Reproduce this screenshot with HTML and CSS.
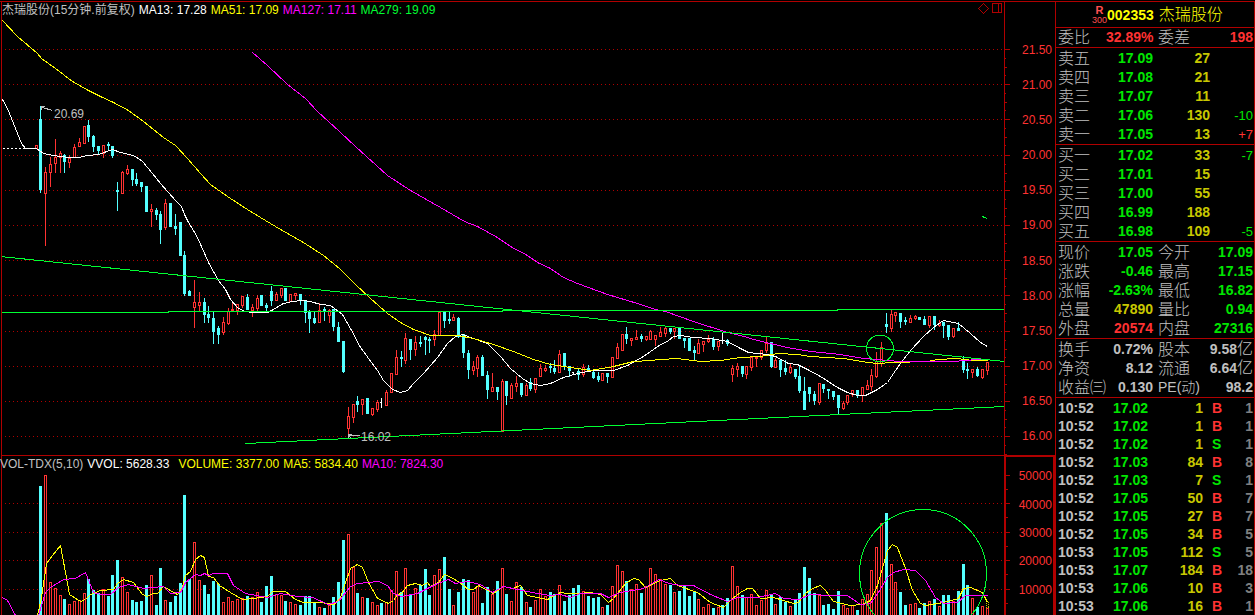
FILE: index.html
```
<!DOCTYPE html>
<html lang="zh-CN">
<head>
    <meta charset="UTF-8">
    <meta name="viewport" content="width=device-width, initial-scale=1.0">
    <title>002353 杰瑞股份</title>
    <link rel="stylesheet" href="styles.css">
</head>
<body>
    <main class="terminal">
        <section class="chart price-chart">
            <div class="legend">
                <span class="legend-title">杰瑞股份(15分钟.前复权)</span>
                <span class="white">MA13: 17.28</span>
                <span class="yellow">MA51: 17.09</span>
                <span class="magenta">MA127: 17.11</span>
                <span class="green">MA279: 19.09</span>
            </div>
            <svg id="price" viewBox="2 2 1002 453" preserveAspectRatio="none"></svg>
        </section>
        <div class="axis price-axis">
            <svg id="priceTicks" viewBox="0 2 10 453" preserveAspectRatio="none"></svg>
            <ul>
                <li>21.50</li>
                <li>21.00</li>
                <li>20.50</li>
                <li>20.00</li>
                <li>19.50</li>
                <li>19.00</li>
                <li>18.50</li>
                <li>18.00</li>
                <li>17.50</li>
                <li>17.00</li>
                <li>16.50</li>
                <li>16.00</li>
            </ul>
        </div>
        <section class="chart volume-chart">
            <div class="legend">
                <span class="legend-title">VOL-TDX(5,10)</span>
                <span class="white">VVOL: 5628.33</span>
                <span class="yellow wide">VOLUME: 3377.00</span>
                <span class="yellow">MA5: 5834.40</span>
                <span class="magenta">MA10: 7824.30</span>
            </div>
            <svg id="volume" viewBox="2 456 1002 159" preserveAspectRatio="none"></svg>
        </section>
        <div class="axis volume-axis">
            <svg id="volumeTicks" viewBox="0 457 10 158" preserveAspectRatio="none"></svg>
            <ul>
                <li>50000</li>
                <li>40000</li>
                <li>30000</li>
                <li>20000</li>
                <li>10000</li>
            </ul>
        </div>
        <aside class="quote">
            <header class="stock">
                <span class="badge"><b>R</b><span>300</span></span>
                <b class="code">002353</b>
                <span class="name">杰瑞股份</span>
            </header>
            <table class="ratio pairs">
                <tr><th>委比</th><td class="red">32.89%</td><th>委差</th><td class="red">198</td></tr>
            </table>
            <table class="orders">
                <tr><th>卖五</th><td class="down">17.09</td><td class="gold">27</td><td></td></tr>
                <tr><th>卖四</th><td class="down">17.08</td><td class="gold">21</td><td></td></tr>
                <tr><th>卖三</th><td class="down">17.07</td><td class="gold">11</td><td></td></tr>
                <tr><th>卖二</th><td class="down">17.06</td><td class="gold">130</td><td class="down">-10</td></tr>
                <tr><th>卖一</th><td class="down">17.05</td><td class="gold">13</td><td class="red">+7</td></tr>
            </table>
            <table class="orders">
                <tr><th>买一</th><td class="down">17.02</td><td class="gold">33</td><td class="down">-7</td></tr>
                <tr><th>买二</th><td class="down">17.01</td><td class="gold">15</td><td></td></tr>
                <tr><th>买三</th><td class="down">17.00</td><td class="gold">55</td><td></td></tr>
                <tr><th>买四</th><td class="down">16.99</td><td class="gold">188</td><td></td></tr>
                <tr><th>买五</th><td class="down">16.98</td><td class="gold">109</td><td class="down">-5</td></tr>
            </table>
            <table class="pairs">
                <tr><th>现价</th><td class="down">17.05</td><th>今开</th><td class="down">17.09</td></tr>
                <tr><th>涨跌</th><td class="down">-0.46</td><th>最高</th><td class="down">17.15</td></tr>
                <tr><th>涨幅</th><td class="down">-2.63%</td><th>最低</th><td class="down">16.82</td></tr>
                <tr><th>总量</th><td class="gold">47890</td><th>量比</th><td class="down">0.94</td></tr>
                <tr><th>外盘</th><td class="red">20574</td><th>内盘</th><td class="down">27316</td></tr>
            </table>
            <table class="pairs">
                <tr><th>换手</th><td>0.72%</td><th>股本</th><td>9.58<i>亿</i></td></tr>
                <tr><th>净资</th><td>8.12</td><th>流通</th><td>6.64<i>亿</i></td></tr>
                <tr><th>收益㈢</th><td>0.130</td><th class="pe">PE(动)</th><td>98.2</td></tr>
            </table>
            <table class="trades">
                <tr><td>10:52</td><td>17.02</td><td>1</td><td class="red">B</td><td>1</td></tr>
                <tr><td>10:52</td><td>17.02</td><td>1</td><td class="red">B</td><td>1</td></tr>
                <tr><td>10:52</td><td>17.02</td><td>1</td><td class="down">S</td><td>1</td></tr>
                <tr><td>10:52</td><td>17.03</td><td>84</td><td class="red">B</td><td>8</td></tr>
                <tr><td>10:52</td><td>17.03</td><td>7</td><td class="down">S</td><td>1</td></tr>
                <tr><td>10:52</td><td>17.05</td><td>50</td><td class="red">B</td><td>7</td></tr>
                <tr><td>10:52</td><td>17.05</td><td>27</td><td class="red">B</td><td>7</td></tr>
                <tr><td>10:52</td><td>17.05</td><td>34</td><td class="red">B</td><td>5</td></tr>
                <tr><td>10:53</td><td>17.05</td><td>112</td><td class="down">S</td><td>5</td></tr>
                <tr><td>10:53</td><td>17.07</td><td>184</td><td class="red">B</td><td>18</td></tr>
                <tr><td>10:53</td><td>17.06</td><td>10</td><td class="red">B</td><td>3</td></tr>
                <tr><td>10:53</td><td>17.06</td><td>16</td><td class="red">B</td><td>1</td></tr>
            </table>
        </aside>
    </main>
    <script src="chart.js"></script>
</body>
</html>
```
FILE: styles.css
```
* {
    box-sizing: border-box;
}

body {
    margin: 0;
    padding-top: 1px;
    background-color: #000;
    color: #c0c0c0;
    font-family: "Liberation Sans", "Noto Sans CJK SC", sans-serif;
    font-size: 12px;
}

.terminal {
    display: grid;
    grid-template-columns: 1fr 51px 200px;
    grid-template-rows: 453fr 160fr;
    height: calc(100vh - 1px);
    border-top: 1px solid #b00000;
    overflow: hidden;
}

.chart {
    position: relative;
    min-height: 0;
    margin-left: 1px;
    border-left: 1px solid #b00000;
}

.volume-chart {
    border-top: 1px solid #b00000;
}

.chart svg {
    display: block;
    width: 100%;
    height: 100%;
    shape-rendering: crispEdges;
}

.legend {
    position: absolute;
    top: 0;
    left: 0;
    display: flex;
    gap: 4px;
    line-height: 16px;
    white-space: nowrap;
}

.volume-chart .legend {
    left: -2px;
}

.legend .wide {
    margin-left: 5px;
}

/* axes */
.axis {
    display: flex;
    min-height: 0;
    border-left: 1px solid #b00000;
    color: #ff3232;
}

.volume-axis {
    border: 2px solid #b00000;
    border-bottom: 0;
}

.axis svg {
    width: 10px;
    height: 100%;
    shape-rendering: crispEdges;
}

.axis ul {
    flex: 1;
    display: grid;
    grid-auto-rows: 1fr;
    margin: 0;
    padding: 30px 3px 1px 0;
    list-style: none;
    text-align: right;
}

.volume-axis ul {
    padding: 5px 1px 11px 0;
}

.axis li {
    display: flex;
    align-items: center;
    justify-content: flex-end;
    min-height: 0;
}

/* quote panel */
.quote {
    grid-column: 3;
    grid-row: 1 / 3;
    border-left: 1px solid #b00000;
    border-right: 1px solid #b00000;
    overflow: hidden;
}

.stock {
    display: flex;
    align-items: center;
    height: 26px;
    padding-left: 36px;
    border-bottom: 1px solid #b00000;
    color: #ffff00;
}

.badge {
    display: flex;
    flex-direction: column;
    align-items: center;
    color: #ff5050;
    font-size: 9px;
    line-height: 10px;
}

.badge b {
    font-size: 11px;
}

.code {
    font-size: 14px;
}

.name {
    margin-left: 5px;
    font-size: 16px;
    font-weight: 300;
    line-height: 24px;
}

table {
    width: 100%;
    table-layout: fixed;
    border-collapse: separate;
    border-spacing: 0;
    padding-top: 1px;
    border-bottom: 1px solid #b00000;
}

th,
td {
    height: 19px;
    padding: 0;
    line-height: 19px;
    font-size: 14px;
    font-weight: bold;
    text-align: right;
    white-space: nowrap;
}

td {
    padding-right: 1px;
}

th {
    padding-left: 2px;
    font-size: 16px;
    font-weight: 300;
    text-align: left;
}

td i {
    font-size: 16px;
    font-style: normal;
    font-weight: 300;
    line-height: 16px;
}

.ratio {
    padding-top: 0;
}

.pairs th:first-child,
.orders th {
    width: 50px;
}

.pairs td:nth-child(2),
.orders td:nth-child(2) {
    width: 48px;
}

.pairs th:nth-child(3) {
    width: 52px;
    padding-left: 4px;
}

.pairs .pe {
    font-size: 14px;
}

.orders td:nth-child(3) {
    width: 57px;
}

.orders td:nth-child(4) {
    font-size: 13px;
    font-weight: normal;
}

.trades {
    border-bottom: 0;
}

.trades td {
    height: 18px;
    line-height: 18px;
    color: #808080;
}

.trades td:nth-child(1) {
    width: 44px;
    padding-left: 2px;
    color: #c0c0c0;
    text-align: left;
}

.trades td:nth-child(2) {
    width: 49px;
    color: #00e600;
}

.trades td:nth-child(3) {
    width: 55px;
    color: #c8c800;
}

.trades td:nth-child(4) {
    width: 24px;
    padding-left: 8px;
    text-align: left;
}

.white {
    color: #fff;
}

.yellow {
    color: #ffff00;
}

.magenta {
    color: #ff00ff;
}

.green {
    color: #00ff32;
}

.gold {
    color: #c8c800;
}

.red,
.trades .red {
    color: #ff3232;
}

.down,
.trades .down {
    color: #00e600;
}

/* drawing */
.grid-line {
    stroke: #b00000;
    stroke-dasharray: 1 3;
}

.tick,
.tool {
    fill: none;
    stroke: #b00000;
}

.up {
    fill: #000;
    stroke: #ff3232;
}

.fall {
    fill: #54ffff;
    stroke: #54ffff;
}

.flat,
.ma13 {
    fill: none;
    stroke: #fff;
}

.ma51 {
    fill: none;
    stroke: #ffff00;
}

.ma127 {
    fill: none;
    stroke: #ff00ff;
}

.trend {
    fill: none;
    stroke: #00ff32;
}

.open-line {
    stroke: #fff;
    stroke-dasharray: 2 2;
}

.forecast {
    fill: none;
    stroke: #c8c800;
    stroke-dasharray: 1 1;
}

.note {
    fill: #c0c0c0;
    font-size: 12px;
}

.note-line {
    fill: none;
    stroke: #c0c0c0;
}
```
FILE: chart.js
```
// x, type (r = up, c = down, w = flat), high, body top, body bottom, low, volume top
const bars = `
36 r 145 145 148 148 0
40 c 105 119 189 192 486
45 r 166 172 193 245 475
50 r 156 164 172 186 582
55 r 138 157 163 172 588
60 r 150 153 157 172 595
64 c 153 155 161 172 599
69 r 154 158 162 167 604
74 r 143 147 157 157 601
79 r 137 142 146 146 600
84 r 125 126 143 143 593
88 c 119 125 136 141 579
93 c 134 136 146 151 590
98 c 145 146 150 153 593
103 r 145 145 153 157 589
108 c 141 144 145 150 596
112 c 145 146 155 157 575
117 c 181 190 191 210 560
122 r 170 172 193 193 577
127 r 164 169 173 174 592
132 c 169 169 179 185 600
136 c 172 179 183 185 602
141 c 182 182 186 191 601
146 c 186 186 211 211 585
151 r 203 209 211 226 575
156 c 207 210 214 219 605
160 c 210 214 229 243 568
165 r 198 203 227 229 600
170 c 203 203 226 226 602
175 c 213 226 228 234 596
180 c 222 222 255 255 583
184 c 250 255 293 295 495
189 c 289 291 295 295 579
194 r 279 302 307 327 542
199 r 291 302 305 311 580
204 c 297 302 314 322 585
208 c 305 314 317 322 594
213 c 311 318 331 343 581
218 c 325 328 334 343 584
223 r 316 322 332 334 602
228 r 307 311 323 324 597
232 r 302 309 310 310 601
237 r 304 304 310 314 599
242 r 296 296 305 307 598
247 c 293 297 309 309 596
252 r 303 307 310 316 597
257 r 294 298 308 310 592
261 c 295 295 305 305 602
266 c 302 305 307 312 586
271 c 285 291 300 305 576
276 r 291 294 300 300 594
281 r 288 288 295 297 595
285 c 288 288 300 300 601
290 r 294 294 301 301 602
295 r 293 293 295 299 604
300 c 293 294 299 304 605
305 c 299 300 312 322 596
309 c 309 312 318 332 596
314 c 311 318 322 323 603
319 r 302 310 322 322 607
324 c 306 309 311 320 608
329 r 308 310 315 322 605
333 c 309 309 326 330 597
338 c 321 327 341 341 582
343 c 340 341 371 372 540
348 r 406 416 428 435 534
353 r 404 404 417 422 567
357 c 395 401 404 411 593
362 r 399 399 404 414 597
367 c 398 398 413 413 598
372 r 408 408 414 415 602
377 r 399 402 409 411 605
381 w 397 402 402 407 603
386 r 389 392 405 405 602
391 r 373 373 392 392 590
396 r 349 357 374 374 571
401 c 350 357 358 366 592
405 r 332 338 360 363 568
410 c 339 339 349 359 594
415 r 335 342 349 355 588
420 c 335 342 343 346 585
425 c 335 337 339 354 569
429 c 336 339 340 352 595
434 r 329 334 339 345 575
439 r 312 312 335 335 569
444 c 311 312 320 327 557
449 c 311 319 320 323 589
453 r 313 317 320 320 605
458 c 316 318 336 337 592
463 c 334 334 352 357 579
468 c 349 353 369 378 580
473 r 360 366 370 374 592
477 r 354 357 368 376 586
482 c 354 357 375 375 603
487 c 370 375 389 398 587
492 r 372 387 391 391 594
497 c 387 387 391 399 581
502 r 378 381 431 431 568
506 c 381 381 395 404 594
511 r 382 385 398 398 601
516 r 375 383 386 391 582
521 c 383 383 394 396 587
526 r 382 385 395 395 602
530 c 377 382 388 390 607
535 r 377 378 389 392 600
540 r 363 368 376 376 589
545 r 364 368 370 371 596
550 c 362 366 367 372 592
554 c 359 368 371 373 594
559 r 349 354 372 372 585
564 c 352 353 365 369 601
569 c 366 366 370 376 595
573 w 371 372 372 374 588
578 c 368 371 374 379 585
583 r 363 367 374 376 591
588 c 364 368 371 371 596
593 c 370 372 377 378 598
598 c 371 376 379 381 597
602 r 373 373 380 380 607
607 c 373 373 376 382 605
612 r 356 357 377 377 586
617 r 342 347 358 358 565
622 r 334 334 350 350 571
626 c 326 334 338 343 581
631 r 337 338 340 345 589
636 r 329 337 339 339 584
641 c 333 336 338 341 593
646 r 335 336 339 340 586
650 r 329 331 339 339 568
655 r 335 335 339 345 574
660 r 326 332 336 336 579
665 r 326 328 333 336 584
670 c 327 328 331 333 585
674 r 327 328 331 338 592
679 c 328 328 338 338 591
684 c 337 338 340 347 585
689 c 337 338 350 350 596
694 c 345 350 352 360 591
698 r 338 343 353 353 599
703 r 340 341 344 351 607
708 r 334 339 341 342 604
713 c 336 339 346 349 608
718 r 340 341 346 350 607
722 w 332 340 340 343 605
727 c 338 340 343 345 598
732 r 364 368 374 381 566
737 r 362 366 369 376 586
742 c 366 366 373 376 595
746 r 366 366 374 378 597
751 r 357 357 367 370 594
756 r 357 357 358 366 605
761 r 349 350 357 359 600
766 r 335 343 350 352 590
771 c 342 342 366 367 595
775 r 357 360 367 367 604
780 c 359 360 369 376 597
785 c 359 368 371 374 602
790 r 363 367 372 373 606
795 c 369 369 376 378 600
799 c 365 376 390 392 593
804 c 376 391 409 409 567
809 c 386 387 393 401 578
814 c 390 394 400 404 593
819 r 383 383 402 404 595
823 c 384 384 388 392 605
828 c 388 389 390 398 604
833 c 391 391 396 399 609
838 c 395 395 407 414 591
843 r 400 403 408 409 605
847 r 394 395 402 404 608
852 r 389 390 394 396 605
857 c 389 390 394 397 610
862 r 386 387 395 401 599
867 r 379 385 389 389 594
871 r 368 375 386 390 570
876 r 351 361 376 377 547
881 r 341 347 363 366 523
886 c 312 324 326 332 513
891 r 308 314 328 331 564
895 r 312 312 315 321 582
900 c 312 313 321 327 592
905 c 316 320 321 324 605
910 r 314 318 322 322 604
915 r 314 316 318 319 603
919 c 316 317 319 319 608
924 c 315 319 324 324 603
929 r 316 316 325 327 601
934 c 316 316 324 329 599
939 r 319 323 325 326 606
943 c 321 322 325 337 595
948 c 325 325 336 339 595
953 r 327 328 336 337 601
958 c 321 328 330 330 591
963 c 355 359 369 372 564
967 c 362 369 370 378 585
972 r 368 369 372 377 598
977 c 366 369 375 376 607
982 r 369 369 377 378 606
987 r 362 362 370 374 608`.trim().split('\n').map(row => row.split(' '));

const ma13 = '2,99 7,108 11,118 17,133 21,143 25,148 36,148 43,153 53,155 68,157 78,157 87,155 98,154 112,149 120,152 129,154 135,156 142,161 152,173 160,183 168,192 175,200 181,206 184,214 187,220 197,237 208,262 218,280 225,289 230,299 238,308 245,311 253,312 267,312 273,309 283,303 292,301 302,300 310,301 320,304 330,305 342,314 350,328 360,347 377,370 383,380 392,389 400,392 407,390 413,383 423,373 437,357 447,343 455,336 462,334 473,338 487,343 500,356 510,368 522,378 530,383 540,385 550,383 563,377 577,373 593,370 613,370 627,365 643,356 660,344 667,341 673,336 680,335 692,337 710,338 727,341 740,348 748,352 767,354 775,356 788,363 797,364 807,369 820,376 837,387 847,392 857,395 865,395 877,389 887,382 893,373 900,363 910,350 923,336 933,327 943,320 958,323 970,333 980,342 987,346';
const ma51 = '2,20 17,36 37,53 41,58 55,68 72,81 88,90 100,96 113,102 128,110 143,121 163,137 175,145 187,158 200,173 210,184 227,196 247,209 260,217 280,229 303,242 323,255 339,268 343,272 355,284 370,298 387,313 400,322 413,329 430,335 437,335 457,335 473,338 493,344 513,351 533,359 550,364 570,367 590,370 613,366 633,361 650,360 660,359 677,358 700,361 720,360 740,357 760,356 777,353 797,354 810,356 843,358 867,362 877,363 893,362 927,361 937,359 957,358 972,360 987,360';
const ma127 = '252,52 267,65 287,84 305,98 317,111 339,131 355,146 387,175 410,190 440,207 464,221 477,226 497,237 510,246 527,255 537,262 550,268 563,277 577,283 607,294 637,303 655,309 665,311 693,321 727,332 740,335 757,340 787,347 810,351 840,354 863,358 887,360 900,361 953,361 977,359 987,359';
const volMa5 = '37,615 41,597 46,563 52,555 60,545 65,572 69,594 80,601 85,599 90,594 100,590 113,589 117,583 123,579 133,582 142,594 147,596 152,593 157,593 163,586 177,594 182,587 185,575 190,571 195,559 200,555 204,557 208,576 213,577 219,585 230,592 242,599 253,598 267,596 272,591 285,591 295,599 303,602 320,602 333,604 335,603 340,597 345,582 350,568 357,564 362,567 368,582 377,598 388,603 393,600 397,594 401,593 407,585 415,583 422,585 427,582 430,586 438,582 444,574 453,578 463,585 468,589 473,589 478,585 493,593 503,586 512,588 520,585 527,595 547,599 560,592 567,593 577,593 590,592 600,594 608,602 613,598 625,583 633,578 638,579 645,587 660,580 670,578 677,585 697,592 710,602 723,607 732,598 740,592 747,588 752,588 760,598 773,597 793,603 798,602 805,593 812,588 820,585 825,590 833,601 850,605 862,604 870,600 877,585 887,550 892,544 897,547 905,568 912,590 920,603 925,605 943,602 958,598 963,588 970,587 982,592 987,602';
const volMa10 = '2,597 7,600 15,615 38,615 45,592 50,587 63,579 75,578 85,572 93,592 100,594 110,594 118,587 128,584 143,588 163,586 170,593 180,592 185,582 195,574 200,575 204,573 208,575 213,573 227,573 233,585 245,593 267,597 280,593 297,596 312,597 328,604 338,601 350,586 357,583 378,581 387,585 393,593 401,596 417,593 437,583 448,579 455,583 467,581 480,584 492,592 503,586 517,589 537,593 550,595 560,594 570,597 580,593 600,593 608,597 620,592 643,588 658,579 669,583 680,585 693,585 710,594 727,601 737,597 757,597 775,593 783,598 798,599 810,594 830,595 847,595 860,604 870,603 878,592 887,577 893,572 903,569 915,570 925,580 935,597 943,603 957,602 965,595 987,595';

const priceLevels = [49, 84, 119, 155, 190, 225, 260, 295, 331, 366, 401, 436];
const volumeLevels = [475, 503, 532, 560, 589];
const kinds = { r: 'up', c: 'fall', w: 'flat' };

// shift by half a pixel so 1px strokes stay sharp
function path(d, cls) {
    return `<path class="${cls}" transform="translate(.5 .5)" d="${d}"/>`;
}

function polyline(points, cls) {
    return path('M' + points, cls);
}

function gridLines(levels) {
    return levels.map(y => path(`M4.5 ${y}H1003`, 'grid-line')).join('');
}

function candle([x, type, high, top, bottom, low]) {
    const cls = kinds[type];
    let out = path(`M${x} ${high}V${Number(low) + 0.5}`, cls);
    if (type === 'w') {
        out += path(`M${x - 1.5} ${top}h2`, cls);
    } else {
        out += path(`M${x - 1} ${top}h2V${bottom}h-2z`, cls);
    }
    return out;
}

function volumeBar([x, type, , , , , top]) {
    if (top === '0') {
        return '';
    }
    return path(`M${x - 1} 620V${top}h2V620z`, type === 'r' ? 'up' : 'fall');
}

function ticks(levels, step) {
    return levels.map(y =>
        path(`M-.5 ${y}H4.5M-.5 ${y + Math.round(step / 2)}H1.5`, 'tick') +
        path(`M-.5 ${y + Math.round(step / 4)}H.5M-.5 ${y + Math.round(step * 3 / 4)}H.5`, 'tick')
    ).join('');
}

document.getElementById('price').innerHTML =
    gridLines(priceLevels) +
    path('M2 148H26', 'open-line') +
    bars.map(candle).join('') +
    polyline(ma13, 'ma13') +
    polyline(ma51, 'ma51') +
    polyline(ma127, 'ma127') +
    path('M982 216L984 217L987 218', 'trend') +
    path('M0 256L1004 361', 'trend') +
    path('M0 312H168V311H502V310H837V309H1004', 'trend') +
    path('M245 443L1004 406', 'trend') +
    path('M866 348a13.5 13.5 0 1 0 27 0a13.5 13.5 0 1 0 -27 0', 'trend') +
    path('M41 109V106H44M42 107L52 110', 'note-line') +
    '<text class="note" x="54" y="118">20.69</text>' +
    path('M348 435H359M348 437V434H351M349 436L351 438', 'note-line') +
    '<text class="note" x="361" y="441">16.02</text>' +
    path('M983 3L988 8L983 13L978 8zM992 3H1001V12H992zM998 3V12', 'tool');

document.getElementById('volume').innerHTML =
    gridLines(volumeLevels.slice(1)) +
    bars.map(volumeBar).join('') +
    path('M986 601H988V607H986z', 'forecast') +
    polyline(volMa5, 'ma51') +
    polyline(volMa10, 'ma127') +
    path('M859 573a63.5 64 0 1 0 127 0a63.5 64 0 1 0 -127 0', 'trend');

document.getElementById('priceTicks').innerHTML = ticks(priceLevels, 35);
document.getElementById('volumeTicks').innerHTML = volumeLevels
    .map(y => path(`M-.5 ${y}H3.5M-.5 ${y + 14}H1.5`, 'tick')).join('');
```
